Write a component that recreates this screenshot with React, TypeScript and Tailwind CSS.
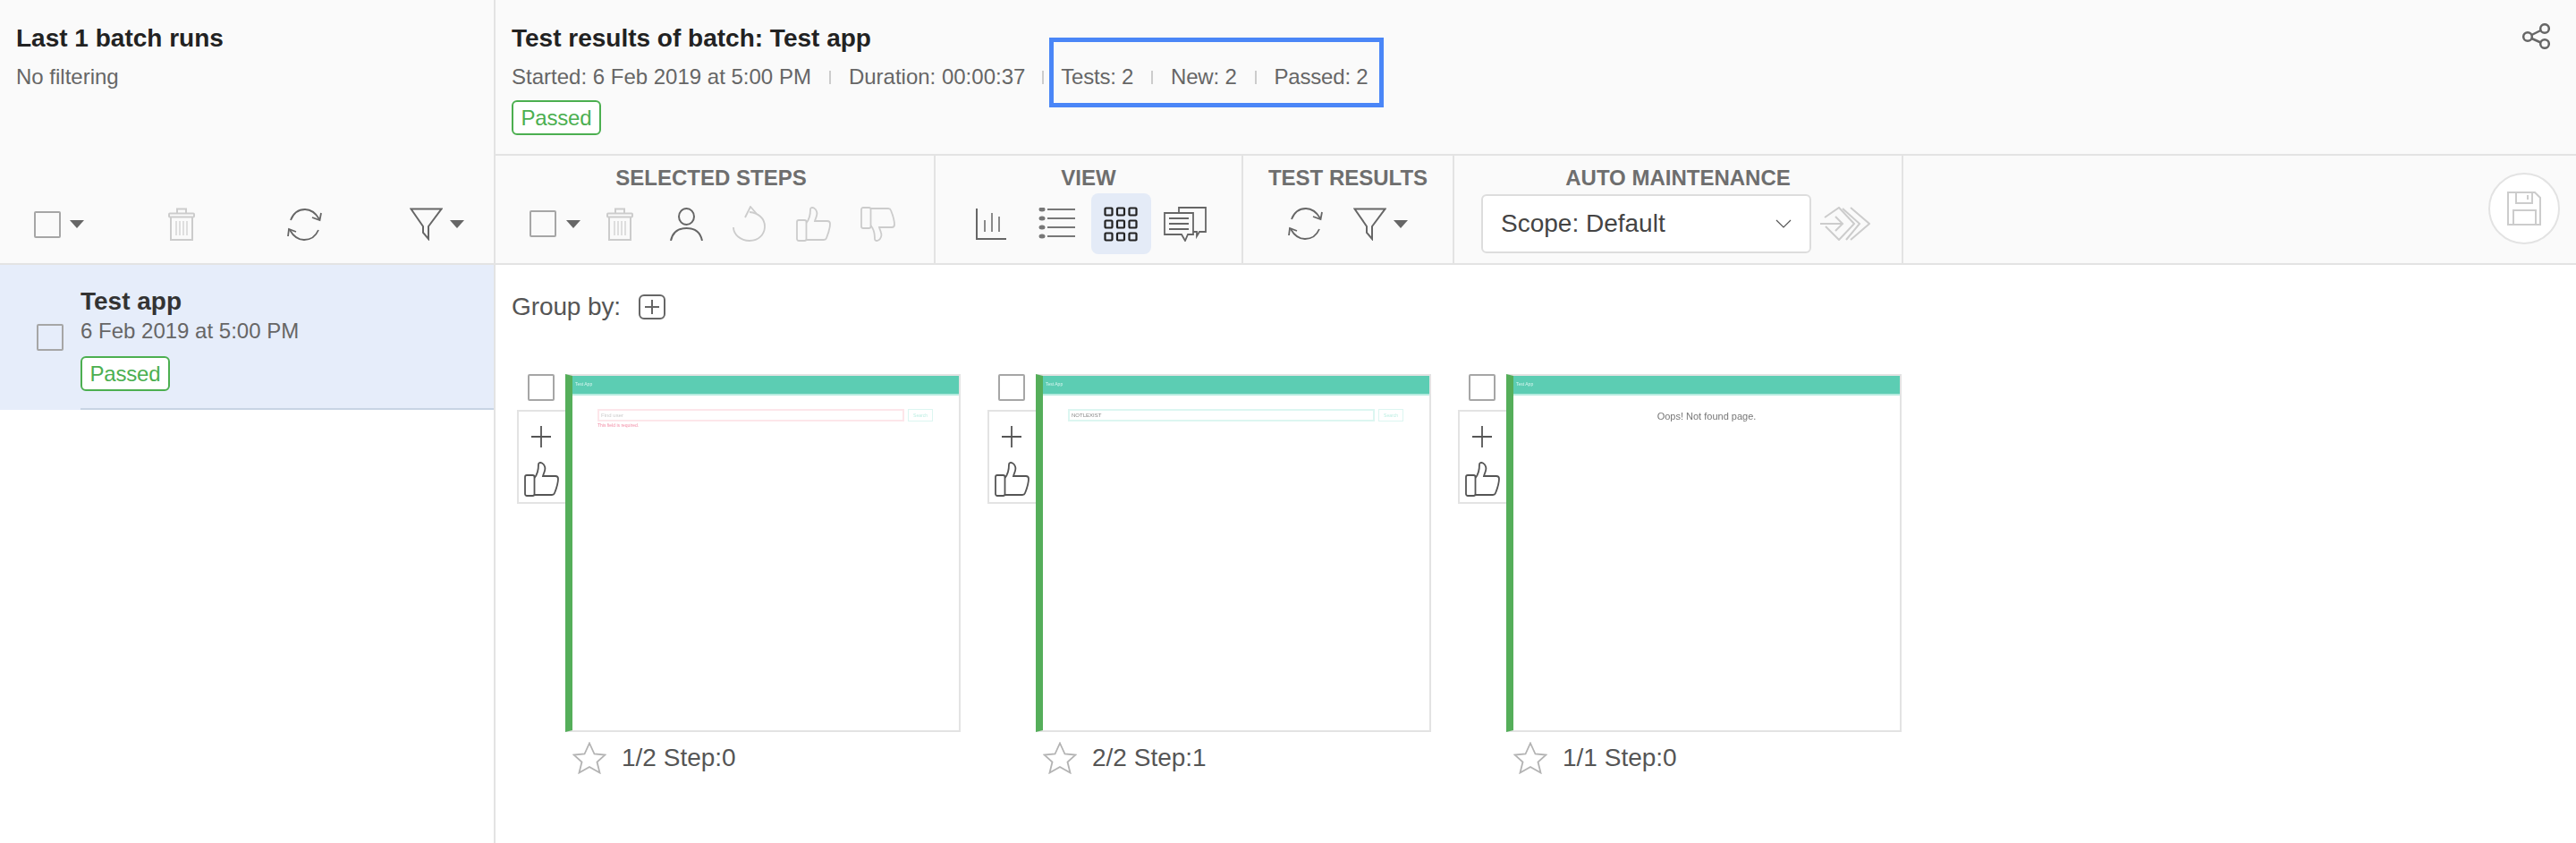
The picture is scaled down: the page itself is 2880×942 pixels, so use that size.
import React from 'react';

const Caret = ({ className = '' }: { className?: string }) => (
  <svg width="16" height="9" viewBox="0 0 16 9" className={className}>
    <path d="M0 0H16L8 9Z" fill="#666" />
  </svg>
);

const Checkbox = ({ className = '' }: { className?: string }) => (
  <div className={`h-[30px] w-[30px] shrink-0 rounded-[2px] border-2 border-[#a6a6a6] ${className}`} />
);

const Trash = ({ className = '' }: { className?: string }) => (
  <svg width="30" height="37" viewBox="0 0 30 37" fill="none" stroke="#ccc" strokeWidth="2" className={className}>
    <path d="M10 6V1.5H20V6" />
    <rect x="1" y="6.500" width="28" height="4" rx="1" />
    <path d="M3 11V36H27V11" />
    <path d="M9 15V31M13 15V31M17 15V31M21 15V31" strokeWidth="1.200" />
  </svg>
);

const Sync = () => (
  <svg width="39" height="36" viewBox="0 0 39 36" fill="none" stroke="#666" strokeWidth="1.800">
    <path d="M4 13C7 5 13 1 20 1C27 1 32 5 36 12" />
    <path d="M28 10L36.500 13L38 5" />
    <path d="M35 24C32 31 26 35 19 35C12 35 7 31 3 24" />
    <path d="M10 26L2 23L1 31" />
  </svg>
);

const Funnel = () => (
  <svg width="37" height="37" viewBox="0 0 37 37" fill="none" stroke="#666" strokeWidth="2">
    <path d="M1.500 1.500H35.500L21 21V35L15 28V21Z" strokeLinejoin="miter" />
  </svg>
);

const Thumb = ({ color, size = 39, className = '' }: { color: string; size?: number; className?: string }) => (
  <svg width={size} height={size} viewBox="0 0 39 39" fill="none" stroke={color} strokeWidth="1.800" className={className}>
    <rect x="1" y="15" width="10.500" height="23" rx="2" />
    <path d="M11.500 18C15 14 16 8 16 3C16 1 18 .5 20 1.500C23 3 24 7 23 10C22.500 12 21.500 14 21 16H35C37 16 38 17 38 19C38 24 36 30 34 35C33.500 36.500 32.500 37 31 37H11.500" />
  </svg>
);

const Person = () => (
  <svg width="37" height="37" viewBox="0 0 37 37" fill="none" stroke="#666" strokeWidth="2">
    <ellipse cx="18.500" cy="10" rx="8.500" ry="9" />
    <path d="M1 37C3 27 10 23 18.500 23C27 23 34 27 36 37" />
  </svg>
);

const Undo = () => (
  <svg width="37" height="40" viewBox="0 0 37 40" fill="none" stroke="#ccc" strokeWidth="1.800">
    <path d="M19 7C29 8 36 14 36 23C36 32 29 39 19 39C9 39 1 32 1 24" />
    <path d="M14 13L20 1L27 9" />
  </svg>
);

const ChartIcon = () => (
  <svg width="34" height="35" viewBox="0 0 34 35" fill="none" stroke="#666">
    <path d="M1 0V34H34" strokeWidth="2" />
    <path d="M10 13V26M18 5V26M26 9V26" strokeWidth="1.500" />
  </svg>
);

const ListIcon = () => (
  <svg width="41" height="36" viewBox="0 0 41 36" fill="#777">
    {[2, 12, 22, 32].map((y) => (
      <g key={y}>
        <ellipse cx="4" cy={y} rx="3.500" ry="2.500" />
        <rect x="10" y={y - 1} width="31" height="2" />
      </g>
    ))}
  </svg>
);

const GridIcon = () => (
  <svg width="39" height="39" viewBox="0 0 39 39" fill="none" stroke="#222" strokeWidth="2.200">
    {[1.500, 15.500, 29.500].map((y) =>
      [1.500, 15, 28.500].map((x) => <rect key={`${x}-${y}`} x={x} y={y} width="8" height="8" rx="1" />),
    )}
  </svg>
);

const ChatIcon = () => (
  <svg width="48" height="39" viewBox="0 0 48 39" fill="none" stroke="#666" strokeWidth="1.800">
    <path d="M17 7V1H47V28H40L37 33V28H33" />
    <path d="M1 7H33V31H27L24 38L20 31H1Z" />
    <path d="M6 13H28M6 19H28M6 25H28" strokeWidth="2" />
  </svg>
);

const ArrowsIcon = () => (
  <svg width="56" height="38" viewBox="0 0 56 38" fill="none" stroke="#ccc" strokeWidth="2">
    <path d="M0 19H25M17 11L25 19L17 27" />
    <path d="M5 12L21 1L38 19L21 37L6 22" />
    <path d="M25 2L44 19L29 37" />
    <path d="M34 1L55 19L34 37" />
  </svg>
);

const StarIcon = () => (
  <svg width="38" height="36" viewBox="0 0 38 36" fill="none" stroke="#b3b3b3" strokeWidth="1.800">
    <path d="M19 1.500L24.500 13.500L36.500 14.500L27.500 22.500L30.500 34.500L19 28L7.500 34.500L10.500 22.500L1.500 14.500L13.500 13.500Z" />
  </svg>
);

const ShareIcon = () => (
  <svg width="31" height="29" viewBox="0 0 31 29" fill="none" stroke="#666" strokeWidth="2.500">
    <circle cx="6" cy="15" r="4.800" />
    <circle cx="25" cy="6" r="4.800" />
    <circle cx="25" cy="23" r="4.800" />
    <path d="M10.500 13L20.500 8M10.500 17L20.500 21.500" />
  </svg>
);

const FloppyIcon = () => (
  <svg width="38" height="38" viewBox="0 0 38 38" fill="none" stroke="#ccc" strokeWidth="2">
    <path d="M1 1H31L37 7V37H1Z" />
    <path d="M10 1V13H28V1M23 4V9" />
    <path d="M7 37V21H32V37" />
  </svg>
);

const PassedBadge = () => (
  <div className="flex h-[39px] w-[100px] items-center justify-center rounded-[6px] border-2 border-[#4caf50] bg-white text-[24px] tracking-[-0.2px] text-[#4caf50]">
    Passed
  </div>
);

const Sep = () => <span className="mx-[20px] h-[15px] w-[2px] bg-[#ccc]" />;

const ToolSection = ({ title, className, titleClass, rowClass, children }: { title: string; className: string; titleClass?: string; rowClass?: string; children: React.ReactNode }) => (
  <div className={`flex shrink-0 flex-col border-r-2 border-[#e3e3e3] pt-[10px] ${className}`}>
    <div className={`text-center text-[24px] leading-[30px] font-bold text-[#6e6e6e] ${titleClass ?? ''}`}>{title}</div>
    <div className={`mt-[2px] flex h-[68px] items-center ${rowClass ?? ''}`}>{children}</div>
  </div>
);

const Mini = ({ children }: { children?: React.ReactNode }) => (
  <div className="flex h-full flex-col">
    <div className="h-[22px] shrink-0 border-b-2 border-[#b5ebdf] bg-[#5ccdb3] pl-[3px] text-[5px] leading-[18px] text-[#d6f5ee] blur-[0.3px]">
      Test App
    </div>
    {children}
  </div>
);

const MiniSearch = ({ value, error }: { value: string; error?: boolean }) => (
  <div className="pt-[15px] pr-[29px] pl-[28px]">
    <div className="flex gap-[4px]">
      <div className={`h-[14px] flex-1 border-2 bg-white pl-[2px] text-[6px] leading-[10px] blur-[0.3px] ${error ? 'border-[#fde6ea] text-[#ccc]' : 'border-[#dcf6f1] text-[#888]'}`}>
        {value}
      </div>
      <div className="h-[14px] w-[28px] border border-[#dcf6f1] text-center text-[5px] leading-[12px] text-[#bdeee3] blur-[0.3px]">Search</div>
    </div>
    {error && <div className="mt-[1px] text-[5px] leading-[7px] text-[#f28ca5] blur-[0.3px]">This field is required.</div>}
  </div>
);

const StepCard = ({ caption, children }: { caption: string; children: React.ReactNode }) => (
  <div className="w-[496px] shrink-0">
    <div className="flex">
      <div className="flex w-[54px] shrink-0 flex-col">
        <Checkbox className="ml-[12px] bg-white" />
        <div className="mt-[10px] flex h-[105px] flex-col items-center border-2 border-r-0 border-[#e3e3e3] pt-[16px] pr-[2px]">
          <svg width="24" height="24" viewBox="0 0 24 24" stroke="#555" strokeWidth="1.800">
            <path d="M12 0V24M1 12H23" />
          </svg>
          <Thumb color="#555" className="mt-[16px]" />
        </div>
      </div>
      <div className="h-[400px] w-[442px] shrink-0 border-2 border-l-[8px] border-[#e3e3e3] border-l-[#55ae5a] bg-white">
        {children}
      </div>
    </div>
    <div className="mt-[10px] flex items-center pl-[62px] text-[28px] leading-[38px] text-[#555]">
      <StarIcon />
      <span className="ml-[17px]">{caption}</span>
    </div>
  </div>
);

export default function App() {
  return (
    <div className="flex h-[942px] overflow-hidden bg-white font-['Liberation_Sans',sans-serif] text-[#666]">
      {/* Batch list */}
      <div className="w-[554px] shrink-0 border-r-2 border-[#e3e3e3]">
        <div className="flex h-[296px] flex-col border-b-2 border-[#e3e3e3] bg-[#fafafa] pt-[25px] pl-[18px]">
          <div className="text-[28px] leading-[36px] font-bold text-[#222]">Last 1 batch runs</div>
          <div className="mt-[8px] text-[24px] leading-[34px]">No filtering</div>
          <div className="mt-[129px] flex h-[37px] items-center pl-[20px]">
            <Checkbox />
            <Caret className="ml-[10px]" />
            <Trash className="ml-[94px]" />
            <div className="ml-[103px]"><Sync /></div>
            <div className="ml-[98px]"><Funnel /></div>
            <Caret className="ml-[8px]" />
          </div>
        </div>
        <div className="relative flex h-[162px] items-center bg-[#e6edfa] pl-[41px]">
          <Checkbox />
          <div className="ml-[19px] flex flex-col pt-[1px]">
            <div className="text-[28px] leading-[38px] font-bold text-[#333]">Test app</div>
            <div className="text-[24px] leading-[28px]">6 Feb 2019 at 5:00 PM</div>
            <div className="mt-[14px]"><PassedBadge /></div>
          </div>
          <div className="absolute right-0 bottom-0 left-[90px] h-[2px] bg-[#c8d4e4]" />
        </div>
      </div>

      <div className="min-w-0 flex-1">
        {/* Batch header */}
        <div className="relative h-[174px] border-b-2 border-[#e3e3e3] bg-[#fafafa] pt-[25px] pl-[18px]">
          <div className="text-[28px] leading-[36px] font-bold text-[#222]">Test results of batch: Test app</div>
          <div className="mt-[8px] flex h-[34px] items-center text-[24px]">
            <span>Started: 6 Feb 2019 at 5:00 PM</span>
            <Sep />
            <span>Duration: 00:00:37</span>
            <span className="mx-[19px] h-[15px] w-[2px] bg-[#ccc]" />
            <span className="tracking-[-0.25px]">Tests: 2</span>
            <Sep />
            <span className="tracking-[-0.2px]">New: 2</span>
            <Sep />
            <span className="tracking-[-0.2px]">Passed: 2</span>
          </div>
          <div className="mt-[9px]"><PassedBadge /></div>
          <div className="absolute top-[42px] left-[619px] h-[78px] w-[374px] border-[5px] border-[#4a86f7]" />
          <div className="absolute top-[26px] right-[29px]"><ShareIcon /></div>
        </div>

        {/* Toolbar */}
        <div className="flex h-[122px] border-b-2 border-[#e3e3e3] bg-[#fafafa]">
          <ToolSection title="SELECTED STEPS" className="w-[492px]" titleClass="pr-[8px]" rowClass="pl-[38px]">
            <Checkbox />
            <Caret className="ml-[11px]" />
            <Trash className="ml-[29px]" />
            <div className="ml-[41px]"><Person /></div>
            <div className="ml-[33px]"><Undo /></div>
            <Thumb color="#ccc" className="ml-[34px]" />
            <Thumb color="#ccc" className="ml-[33px] -scale-y-100" />
          </ToolSection>
          <ToolSection title="VIEW" className="w-[344px]" rowClass="pl-[45px]">
            <ChartIcon />
            <div className="ml-[36px]"><ListIcon /></div>
            <div className="ml-[18px] flex h-[68px] w-[67px] items-center justify-center rounded-[8px] bg-[#e4ebf7]"><GridIcon /></div>
            <div className="ml-[14px]"><ChatIcon /></div>
          </ToolSection>
          <ToolSection title="TEST RESULTS" className="w-[236px]" rowClass="pl-[50px]">
            <Sync />
            <div className="ml-[34px]"><Funnel /></div>
            <Caret className="ml-[8px]" />
          </ToolSection>
          <ToolSection title="AUTO MAINTENANCE" className="w-[502px]" rowClass="pl-[30px]">
            <div className="flex h-[66px] w-[369px] items-center justify-between rounded-[6px] border-2 border-[#ddd] bg-white pr-[20px] pl-[20px] text-[28px] text-[#444]">
              <span>Scope: Default</span>
              <svg width="18" height="10" viewBox="0 0 18 10" fill="none" stroke="#555" strokeWidth="1.200">
                <path d="M1 1L9 9L17 1" />
              </svg>
            </div>
            <div className="ml-[10px]"><ArrowsIcon /></div>
          </ToolSection>
          <div className="ml-auto flex items-center pr-[18px] pb-[2px]">
            <div className="flex h-[80px] w-[80px] items-center justify-center rounded-full border-2 border-[#e3e3e3] bg-white">
              <FloppyIcon />
            </div>
          </div>
        </div>

        {/* Steps */}
        <div className="pt-[30px] pl-[18px]">
          <div className="flex h-[34px] items-center text-[28px] tracking-[-0.1px] text-[#555]">
            <span>Group by:</span>
            <svg width="30" height="28" viewBox="0 0 30 28" fill="none" stroke="#666" strokeWidth="2" className="ml-[20px]">
              <rect x="1" y="1" width="28" height="26" rx="5" />
              <path d="M15 6V22M7 14H23" />
            </svg>
          </div>
          <div className="mt-[58px] ml-[6px] flex gap-[30px]">
            <StepCard caption="1/2 Step:0">
              <Mini><MiniSearch value="Find user" error /></Mini>
            </StepCard>
            <StepCard caption="2/2 Step:1">
              <Mini><MiniSearch value="NOTLEXIST" /></Mini>
            </StepCard>
            <StepCard caption="1/1 Step:0">
              <Mini>
                <div className="pt-[16px] text-center text-[11px] leading-[14px] text-[#777] blur-[0.3px]">Oops! Not found page.</div>
              </Mini>
            </StepCard>
          </div>
        </div>
      </div>
    </div>
  );
}
